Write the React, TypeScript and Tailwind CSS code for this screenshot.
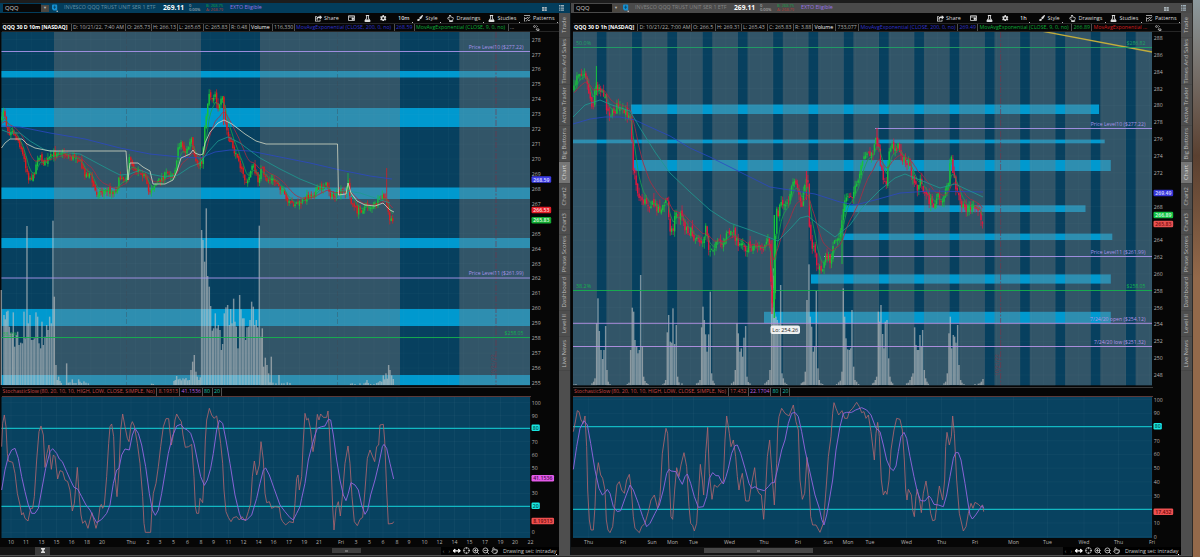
import type { ReactNode } from 'react';
import { clsx } from 'clsx';
import { ZoomIn, ZoomOut, Crosshair, MoveHorizontal, Pointer } from 'lucide-react';
import { FaShareSquare, FaFlask, FaCog, FaRegHandPointUp, FaPaintBrush } from 'react-icons/fa';

type Pt = [number, number];
type Level = { y: number; x1?: number; color: string; label?: string; left?: string };
type Badge = { y: number; text: string; fill: string; color: string };

type PanelConfig = {
  id: string;
  x0: number;
  width: number;
  plotLeft: number;
  plotRight: number;
  title: string;
  info: { text: string; w: string; c: string }[];
  interval: string;
  bands: { x1: number; x2: number; y1: number; y2: number }[];
  afterHours: Pt[];
  levels: Level[];
  price: Pt[];
  noise: number;
  down: string;
  lines: { pts: Pt[]; color: string }[];
  volume: Pt[];
  ticks: { label: string; y: number }[];
  badges: Badge[];
  dashes: number[];
  expiry: number;
  gridX: number;
  study: { k: string; d: string; hi: number; lo: number; zero: number; hundred: number; kv: string; dv: string };
  studyBadges: Badge[];
  times: [string, number][];
};

// numbers come as "x,y x,y ..." to keep the long series readable
const parse = (s: string): Pt[] => s.trim().split(/\s+/).map((p) => p.split(',').map(Number) as Pt);
const toPoints = (pts: Pt[]) => pts.map((p) => p.join(',')).join(' ');

const leftPrice = parse(`2,120 3.3,108 5,115 7,127 9,133 12,127 15,136 18,140 21,147 23,156 27,170 28,177 33,178 35,170 38,155
  42,160 45,163 48,160 53,155 59,150 63,153 68,155 72,158 77,155 82,168 86,175 90,173 93,185 96,193 100,192 107,190 115,192 118,183
  122,175 124,180 127,173 129,160 132,163 135,168 140,170 145,177 148,192 150,190 152,187 157,183 163,177 168,173 173,173 177,163
  178,147 181,142 185,153 187,150 192,138 193,153 197,168 200,162 202,163 203,147 205,127 207,107 209,93 212,98 216,92 217,107
  220,107 222,97 224,110 226,127 230,143 233,147 236,157 238,153 241,170 245,180 248,183 252,163 255,173 258,180 262,167 264,178
  267,180 272,180 278,183 282,190 285,198 287,202 290,205 295,203 300,204 305,198 310,195 318,190 325,184 328,188 332,197 335,196
  339,193 345,192 348,182 350,198 355,209 358,211 362,209 367,205 372,207 378,202 382,197 385,198 387,207 390,220 392,223 394,221`);

const rightPrice = parse(`574,90 577,73 581,72 585,70 587,83 590,97 593,107 595,88 599,86 603,91 605,100 608,111 612,114 617,106
  620,110 624,113 630,113 632,140 633,167 636,183 638,194 643,201 648,203 657,207 662,210 667,198 670,227 673,232 675,210 678,218
  682,213 685,227 690,231 695,238 698,233 702,250 703,243 706,222 709,250 712,247 718,243 723,243 727,230 730,237 733,228 737,243
  738,249 742,238 745,248 752,247 757,245 763,251 769,241 772,306 774,290 775,240 776,210 778,216 780,200 783,203 788,201 790,192
  794,184 797,187 802,208 806,174 808,188 809,220 812,245 815,253 817,266 822,272 824,259 830,260 834,244 837,243 840,233 843,212
  846,197 852,194 857,187 860,173 863,163 866,150 868,153 872,157 877,136 880,160 883,177 887,181 888,162 891,147 898,147 902,156
  905,163 908,163 912,178 915,186 918,187 920,180 923,188 928,199 933,204 938,197 942,200 945,193 948,185 951,158 953,173 956,189
  958,195 963,209 968,207 973,208 978,210 981,217 983,222`);

const leftVolume = parse(`4,300 12,375 16,388 20,365 24,362 28,410 32,430 37,430 40,367 44,470 49,435 53,425 57,465 62,458 67,460
  72,365 76,445 81,108 85,400 90,375 94,450 99,450 103,445 108,367 113,380 117,460 122,475 126,395 130,465 135,440 140,405 144,420
  149,380 154,400 159,92 163,320 168,525 172,570 176,560 180,573 184,579 200,520 205,578 210,577 217,568 222,579 228,579 236,568
  240,575 245,579 252,574 258,578 265,580 455,581 460,582 522,573 526,570 530,558 535,568 540,566 544,571 549,565 554,568 558,564
  563,571 568,570 573,540 578,515 583,495 588,545 592,560 597,570 601,562 605,120 609,150 614,215 619,55 623,258 628,290 632,348
  637,422 641,415 646,370 651,415 655,405 660,420 664,480 668,462 673,370 678,352 683,345 688,405 692,357 696,400 701,326 705,395
  709,410 714,475 719,315 723,358 728,385 732,385 737,450 741,412 746,410 750,390 755,335 760,350 764,405 769,390 773,412 778,107
  783,440 787,415 791,530 796,503 801,525 806,550 810,577 814,500 819,578 828,580 837,555 845,580 852,580 862,577 870,579
  1052,581 1057,580 1065,582 1080,580 1092,580 1097,578 1101,570 1105,579 1112,582 1122,582 1130,579 1135,577 1140,573 1145,575
  1150,556 1154,568 1158,550 1162,566 1166,525 1170,540 1175,556 1180,567`);

const rightVolume = parse(`12,583 18,582 66,580 71,575 75,565 80,400 84,325 88,423 93,480 98,507 102,480 107,408 111,540 115,575 120,582
  172,582 177,578 182,480 187,353 191,365 195,450 200,468 204,490 208,480 212,255 217,470 221,560 225,573 230,579 234,582 278,583
  283,580 287,570 292,427 296,375 301,455 305,458 309,355 314,462 319,405 323,560 327,577 336,580 380,580 385,578 390,570 395,412
  399,350 403,390 407,433 411,485 416,433 421,305 425,550 429,572 433,580 485,580 491,575 496,540 501,400 505,430 510,485 514,475
  518,500 522,443 527,408 531,560 535,576 540,580 585,580 590,575 595,570 600,540 605,285 610,235 614,370 618,380 622,390 627,400
  632,285 636,550 640,565 645,578 650,582 694,580 698,577 702,575 706,545 711,330 717,223 721,380 725,410 730,485 734,470 739,303
  744,535 748,570 753,580 758,582 800,582 806,577 811,572 816,545 820,295 824,380 828,445 833,478 838,480 842,475 846,360 851,530
  855,570 860,575 866,582 908,580 912,578 916,570 920,560 925,365 929,395 933,345 938,432 942,475 946,395 951,390 956,505 960,560
  964,575 968,580 1010,580 1015,578 1020,570 1025,560 1029,550 1034,412 1038,465 1042,480 1046,480 1050,435 1054,470 1058,420
  1063,540 1067,565 1071,575 1075,581 1122,580 1127,575 1132,550 1137,430 1141,380 1145,475 1150,435 1154,440 1158,458 1163,405
  1167,525 1172,570 1176,578 1182,582 1215,582 1225,581 1230,580 1234,575 1239,567`);

const leftK = `5,200 8,130 13,105 18,140 22,220 25,243 38,247 45,280 52,340 60,375 65,405 70,398 75,415 84,423 92,385 98,385 103,350
  110,240 117,155 123,138 130,165 135,262 141,220 147,195 154,268 160,225 165,230 173,297 180,272 188,275 195,300 203,305 210,330
  217,393 223,370 232,262 237,340 243,405 248,430 255,422 264,445 270,420 276,398 288,445 295,420 300,380 304,373 308,385 313,375
  320,290 326,190 330,140 335,132 341,170 345,290 351,350 357,270 362,150 368,102 375,140 382,175 387,185 393,135 397,125 403,138
  412,190 420,250 428,350 432,430 436,457 452,457 455,400 460,340 468,310 475,260 482,200 490,140 498,116 506,116 514,195 520,165
  525,120 530,102 537,115 544,125 549,165 556,202 566,200 575,193 582,290 586,380 590,400 596,400 600,355 608,368 612,300 616,180
  620,120 628,85 635,105 642,115 650,108 656,145 662,190 668,250 672,330 678,395 685,412 693,425 700,413 710,410 718,420 726,410
  736,423 745,395 752,370 757,290 763,243 770,285 778,255 783,185 790,240 795,340 800,368 808,365 815,385 825,380 838,382 843,415
  848,425 857,435 868,425 880,428 885,370 890,295 894,285 898,330 905,290 910,180 915,100 920,120 925,115 932,150 939,215 945,180
  952,103 957,120 962,102 970,112 980,112 984,93 988,150 993,250 998,380 1002,450 1008,385 1015,365 1021,408 1027,350 1035,250
  1044,198 1050,250 1056,350 1063,425 1072,437 1080,418 1088,412 1095,330 1102,235 1110,210 1124,245 1130,200 1136,195 1140,135
  1150,133 1154,180 1160,330 1165,432 1178,430 1181,425`;

const leftD = `5,330 15,270 25,230 35,210 45,205 55,235 65,290 75,335 85,375 95,400 105,400 115,385 125,330 137,265 150,215 158,206
  170,220 178,237 187,245 200,275 212,302 222,322 233,327 245,350 258,375 270,390 280,410 290,428 305,418 320,400 330,375 340,310
  350,270 357,265 365,225 375,207 388,210 397,165 405,145 415,160 425,195 437,260 448,340 457,390 466,406 475,390 485,340 495,280
  505,220 517,170 530,138 542,133 552,145 562,150 572,160 582,190 592,240 602,290 613,316 622,300 632,265 640,220 650,150 658,121
  668,130 678,180 690,250 705,345 718,400 725,418 740,420 755,405 770,355 780,310 790,270 797,264 808,285 822,325 840,375 855,395
  870,413 880,420 890,400 900,380 905,355 915,310 925,240 935,200 945,165 952,145 965,140 975,138 985,118 992,120 1000,165 1010,240
  1020,300 1030,345 1038,362 1045,340 1053,308 1065,315 1075,330 1085,375 1095,403 1103,390 1112,345 1125,300 1137,250 1147,200
  1152,193 1160,205 1170,250 1181,297`;

const rightK = `10,155 17,120 22,92 27,95 33,120 40,130 45,108 50,200 53,330 58,420 63,450 70,450 75,380 78,300 85,248 92,285 98,295
  105,330 109,420 114,450 120,458 128,440 135,370 141,315 148,305 155,330 163,340 170,300 178,283 184,330 190,410 195,445 208,458
  215,440 225,430 235,395 243,360 253,345 263,385 270,350 277,220 288,145 293,160 298,300 303,410 308,418 314,330 320,263 327,290
  333,255 342,218 350,260 357,380 362,430 368,437 373,453 380,430 385,350 391,253 397,300 401,345 407,220 413,142 418,280 426,358
  433,315 442,322 452,310 460,305 465,180 470,108 478,160 483,200 490,180 497,230 502,290 507,330 512,300 517,280 527,363 537,363
  545,310 554,263 560,325 567,340 574,345 581,418 587,330 592,230 599,180 606,280 613,375 620,250 623,150 627,110 635,85 645,100
  657,108 670,75 678,125 685,150 690,300 697,358 704,340 711,232 717,300 722,410 728,435 738,435 750,457 760,430 768,330 775,230
  783,170 788,100 792,68 798,85 806,105 816,92 824,115 832,115 838,95 848,85 860,67 868,80 875,98 882,95 888,115 895,105 903,155
  913,240 918,160 923,127 928,170 934,300 940,345 946,333 951,343 957,300 963,210 972,150 980,115 990,118 997,150 1003,240 1007,330
  1011,360 1015,328 1024,345 1028,390 1033,410 1038,350 1042,328 1050,370 1054,398 1060,340 1068,303 1075,350 1082,400 1088,422
  1095,420 1100,380 1108,318 1118,360 1124,300 1127,200 1131,157 1138,195 1144,170 1148,108 1153,160 1160,300 1168,400 1180,453
  1188,440 1195,400 1203,370 1209,385 1215,367 1225,373 1232,380 1238,375 1241,395`;

const rightD = `10,268 20,200 30,145 42,122 52,135 62,190 75,270 87,325 97,345 105,338 112,328 120,340 130,380 142,395 152,392 165,355
  180,315 190,330 205,370 218,410 230,440 240,430 255,400 268,375 280,330 290,280 297,268 303,273 318,275 327,295 337,313 345,290
  352,282 362,310 373,350 385,382 400,380 410,350 418,295 428,278 438,287 446,287 452,300 460,312 468,290 475,265 485,220 495,197
  502,195 512,220 525,265 537,310 545,325 555,320 565,327 583,332 595,320 605,308 613,308 622,270 635,210 645,180 655,130 665,100
  675,97 685,110 695,155 705,210 715,255 725,300 735,345 748,385 755,418 762,435 770,405 778,360 788,300 798,210 810,140 820,100
  830,97 845,97 857,90 875,83 890,90 903,105 918,145 930,155 940,195 950,240 960,263 970,272 978,258 985,215 993,170 1002,157
  1010,175 1020,230 1032,290 1042,335 1052,362 1065,363 1077,348 1083,355 1092,373 1105,375 1120,380 1130,345 1140,290 1150,235
  1157,218 1165,218 1173,240 1185,310 1195,375 1200,405 1207,417 1217,405 1227,390 1237,377 1241,385`;

const shift = (pts: Pt[], dx: number): Pt[] => pts.map(([x, y]) => [dx + x / 3, y]);

const PURPLE = '#a894ea';
const GREEN = '#14b24e';
const BLUE = '#2b47c4';
const TEAL = '#1d9a90';

const dayStarts = Array.from({ length: 16 }, (_, i) => 596.8 + i * 35.28);
const rightGaps: Pt[] = [
  [573, dayStarts[0]],
  ...dayStarts.map((x, i): Pt => [x + 9.6, i < 15 ? dayStarts[i + 1] : 1152]),
];

const left: PanelConfig = {
  id: 'left',
  x0: 0,
  width: 559,
  plotLeft: 1.5,
  plotRight: 530,
  title: 'QQQ 30 D 10m [NASDAQ]',
  interval: '10m',
  info: [
    { text: 'D: 10/21/22, 7:40 AM', w: 'w-[54px]', c: 'text-[#b0b0b0]' },
    { text: 'O: 265.73', w: 'w-[26px]', c: 'text-[#b0b0b0]' },
    { text: 'H: 266.13', w: 'w-[26px]', c: 'text-[#b0b0b0]' },
    { text: 'L: 265.65', w: 'w-[26px]', c: 'text-[#b0b0b0]' },
    { text: 'C: 265.83', w: 'w-[26px]', c: 'text-[#b0b0b0]' },
    { text: 'R: 0.48', w: 'w-[20px]', c: 'text-[#b0b0b0]' },
    { text: 'Volume', w: 'w-[23px]', c: 'text-white' },
    { text: '116,330', w: 'w-[22px]', c: 'text-[#b0b0b0]' },
    { text: 'MovAvgExponential (CLOSE, 200, 0, no)', w: 'w-[100px]', c: 'text-[#3034d0]' },
    { text: '268.59', w: 'w-[20px]', c: 'text-[#3034d0]' },
    { text: 'MovAvgExponential (CLOSE, 9, 0, no)', w: 'w-[94px]', c: 'text-[#0cae38]' },
    { text: '...', w: 'w-[10px]', c: 'text-[#b0b0b0]' },
  ],
  bands: [
    { x1: 1.5, x2: 530, y1: 71, y2: 77.5 },
    { x1: 1.5, x2: 530, y1: 108, y2: 127 },
    { x1: 1.5, x2: 530, y1: 187.5, y2: 199 },
    { x1: 1.5, x2: 530, y1: 238, y2: 248 },
    { x1: 1.5, x2: 530, y1: 309, y2: 326 },
    { x1: 1.5, x2: 530, y1: 375, y2: 385 },
  ],
  afterHours: [[54, 201], [260, 400], [459.3, 530]],
  levels: [
    { y: 51.5, color: PURPLE, label: 'Price Level10 ($277.22)' },
    { y: 278, color: PURPLE, label: 'Price Level11 ($261.99)' },
    { y: 337.5, color: GREEN, label: '$258.05' },
  ],
  price: leftPrice,
  noise: 7,
  down: '#dc1c20',
  lines: [
    { color: BLUE, pts: parse('1.5,126 20,127 50,133 85,139 120,148 150,154 180,157 200,158 215,152 230,150 250,151 280,157 310,163 340,170 370,176 392,179') },
    { color: TEAL, pts: parse('2,130 10,133 20,133 30,141 45,150 60,152 80,154 95,162 110,170 120,175 130,174 140,170 150,174 165,177 178,175 190,167 200,163 208,152 218,141 228,137 240,143 260,158 280,169 300,179 320,187 340,190 360,193 390,203') },
    { color: '#d3d8c4', pts: parse('1.5,148 5,143 10,139 22,139 27,144 35,148 50,151 126,151 128,180 130,163 138,163 143,167 150,171 153,184 165,184 173,180 177,171 181,158 190,154 193,150 195,153 200,155 203,154 205,143 210,132 218,123 224,120 232,124 245,134 256,141 266,144 337.5,144 338.5,195 346,194 348,183 351,193 357,201 365,205 375,206 383,203 390,210 394,212') },
  ],
  volume: shift(leftVolume, 0),
  ticks: Array.from({ length: 24 }, (_, i) => ({ label: String(278 - i), y: 39.6 + i * 14.93 })),
  badges: [
    { y: 179.5, text: '268.59', fill: '#3d3de6', color: '#dcdcff' },
    { y: 210, text: '266.53', fill: '#e31e28', color: '#ffdede' },
    { y: 220.3, text: '265.83', fill: '#12ab32', color: '#e0ffe0' },
  ],
  dashes: [126.5, 337.5],
  expiry: 496,
  gridX: 14.9,
  study: { k: leftK, d: leftD, hi: 145, lo: 379, zero: 457, hundred: 68, kv: '8.19313', dv: '41.1536' },
  studyBadges: [
    { y: 427.8, text: '80', fill: '#19e6e0', color: '#055' },
    { y: 478.2, text: '41.1536', fill: '#e35ae8', color: '#4a0a50' },
    { y: 505.8, text: '20', fill: '#19e6e0', color: '#055' },
    { y: 521, text: '8.19313', fill: '#ee5050', color: '#6a0808' },
  ],
  times: [
    ['10', 11], ['11', 26], ['13', 41.5], ['15', 56.5], ['16', 71.5], ['18', 87], ['20', 102], ['Thu', 131], ['2', 148], ['3', 160],
    ['5', 173.5], ['6', 187.5], ['8', 201], ['9', 213.5], ['11', 228.5], ['12', 243.5], ['14', 258.5], ['16', 273.5], ['17', 289],
    ['19', 304.3], ['21', 319], ['Fri', 341], ['3', 356], ['5', 369.5], ['6', 383], ['8', 397], ['9', 409], ['10', 424.5],
    ['12', 439.5], ['14', 454.5], ['15', 469.5], ['17', 485], ['19', 500.5], ['20', 515], ['22', 530.5],
  ],
};

const right: PanelConfig = {
  id: 'right',
  x0: 571,
  width: 610,
  plotLeft: 573,
  plotRight: 1152,
  title: 'QQQ 30 D 1h [NASDAQ]',
  interval: '1h',
  info: [
    { text: 'D: 10/21/22, 7:00 AM', w: 'w-[53.5px]', c: 'text-[#b0b0b0]' },
    { text: 'O: 266.5', w: 'w-[24px]', c: 'text-[#b0b0b0]' },
    { text: 'H: 269.31', w: 'w-[26px]', c: 'text-[#b0b0b0]' },
    { text: 'L: 265.43', w: 'w-[26px]', c: 'text-[#b0b0b0]' },
    { text: 'C: 265.83', w: 'w-[26px]', c: 'text-[#b0b0b0]' },
    { text: 'R: 3.88', w: 'w-[19.5px]', c: 'text-[#b0b0b0]' },
    { text: 'Volume', w: 'w-[23px]', c: 'text-white' },
    { text: '733,077', w: 'w-[23px]', c: 'text-[#b0b0b0]' },
    { text: 'MovAvgExponential (CLOSE, 200, 0, no)', w: 'w-[99px]', c: 'text-[#3034d0]' },
    { text: '269.49', w: 'w-[20px]', c: 'text-[#3034d0]' },
    { text: 'MovAvgExponential (CLOSE, 9, 0, no)', w: 'w-[94px]', c: 'text-[#0cae38]' },
    { text: '266.89', w: 'w-[20px]', c: 'text-[#0cae38]' },
    { text: 'MovAvgExponential ...', w: 'w-[58px]', c: 'text-[#d41c1c]' },
  ],
  bands: [
    { x1: 631, x2: 1099, y1: 104.5, y2: 114 },
    { x1: 573, x2: 1104.7, y1: 139.6, y2: 143.3 },
    { x1: 633, x2: 1110.8, y1: 160, y2: 171 },
    { x1: 844, x2: 1085.5, y1: 205.3, y2: 212 },
    { x1: 843, x2: 1112.3, y1: 233.6, y2: 240 },
    { x1: 811, x2: 1110.8, y1: 274.4, y2: 283.6 },
    { x1: 764, x2: 1110.8, y1: 311.8, y2: 323 },
  ],
  afterHours: rightGaps,
  levels: [
    { y: 47.5, color: '#1fa265', label: '$286.82', left: '50.0%' },
    { y: 128.5, x1: 875, color: PURPLE, label: 'Price Level10 ($277.22)' },
    { y: 256.5, x1: 824, color: PURPLE, label: 'Price Level11 ($261.99)' },
    { y: 290.5, color: GREEN, label: '$258.05', left: '38.2%' },
    { y: 323.3, color: '#b794e8', label: '7/24/20 open ($254.12)' },
    { y: 346.5, color: '#b794e8', label: '7/24/20 low ($251.32)' },
  ],
  price: rightPrice,
  noise: 9,
  down: '#e0183f',
  lines: [
    { color: BLUE, pts: parse('573,124 590,119 605,117 620,117 635,120 650,127 670,136 690,148 710,157 740,172 770,187 790,190 815,194 840,202 855,205 875,200 900,193 930,191 983,192') },
    { color: TEAL, pts: parse('573,117 585,105 600,100 612,105 630,111 640,128 655,152 670,173 690,192 710,210 730,223 750,230 768,237 778,241 790,229 800,218 808,216 820,226 835,237 850,225 862,208 880,190 895,178 905,174 920,180 940,188 955,184 970,191 983,197') },
  ],
  volume: shift(rightVolume, 570),
  ticks: Array.from({ length: 21 }, (_, i) => ({ label: String(288 - i * 2), y: 38 + i * 16.85 })),
  badges: [
    { y: 193, text: '269.49', fill: '#3636d8', color: '#dcdcff' },
    { y: 215, text: '266.89', fill: '#14c044', color: '#d8ffe0' },
    { y: 224, text: '265.83', fill: '#e85252', color: '#7a0c0c' },
  ],
  dashes: [],
  expiry: 1000.6,
  gridX: 11.76,
  study: { k: rightK, d: rightD, hi: 140, lo: 388, zero: 470, hundred: 59, kv: '17.432', dv: '22.1704' },
  studyBadges: [
    { y: 426.3, text: '80', fill: '#19e6e0', color: '#055' },
    { y: 511.8, text: '17.432', fill: '#ee5050', color: '#6a0808' },
  ],
  times: [
    ['Thu', 588.7], ['Fri', 623], ['Sun', 652], ['Mon', 672.5], ['Tue', 693.5], ['Wed', 729.5], ['Thu', 764], ['Fri', 798],
    ['Sun', 828], ['Mon', 848], ['Tue', 870], ['Wed', 906.5], ['Thu', 941.5], ['Fri', 975], ['Mon', 1013.5], ['Tue', 1047.5],
    ['Wed', 1084], ['Thu', 1118.5], ['Fri', 1152],
  ],
};

const sideTabs = [
  { label: 'Trade', h: 'h-[25px]' },
  { label: 'Times And Sales', h: 'h-[47px]' },
  { label: 'Active Trader', h: 'h-[41px]' },
  { label: 'Big Buttons', h: 'h-[36px]' },
  { label: 'Chart', h: 'h-[22px]', active: true },
  { label: 'Chart2', h: 'h-[26px]' },
  { label: 'Chart3', h: 'h-[25px]' },
  { label: 'Phase Scores', h: 'h-[40px]' },
  { label: 'Dashboard', h: 'h-[36px]' },
  { label: 'Level II', h: 'h-[26px]' },
  { label: 'Live News', h: 'h-[34px]' },
];

function interpolate(pts: Pt[], x: number) {
  const i = pts.findIndex((p) => p[0] >= x);
  if (i <= 0) return pts[i === 0 ? 0 : pts.length - 1][1];
  const [x1, y1] = pts[i - 1];
  const [x2, y2] = pts[i];
  return y1 + ((y2 - y1) * (x - x1)) / (x2 - x1);
}

function buildCandles(pts: Pt[], noise: number) {
  let seed = 7;
  const rand = () => {
    seed = (seed * 16807) % 2147483647;
    return seed / 2147483647;
  };
  const out: { x: number; open: number; close: number; high: number; low: number }[] = [];
  let open = pts[0][1];
  for (let x = pts[0][0]; x <= pts[pts.length - 1][0]; x += 1.48) {
    const close = interpolate(pts, x) + (rand() - 0.5) * noise;
    const high = Math.min(open, close) - rand() * noise * 0.7;
    const low = Math.max(open, close) + rand() * noise * 0.7;
    out.push({ x, open, close, high, low });
    open = close + (rand() - 0.5) * noise * 0.5;
  }
  return out;
}

function ema(candles: { x: number; close: number }[], length: number): Pt[] {
  const k = 2 / (length + 1);
  let v = candles[0].close + 8;
  return candles.map((c) => {
    v += (c.close - v) * k;
    return [c.x, Number(v.toFixed(1))];
  });
}

const isCovered = (y: number, badges: Badge[]) => badges.some((b) => Math.abs(b.y - y) < 5.2);

function AxisBadge({ x, badge }: { x: number; badge: Badge }) {
  const w = badge.text.length * 2.85 + 2.6;
  return (
    <g>
      <rect x={x} y={badge.y - 3.2} width={w} height="6.4" rx="1.2" fill={badge.fill} />
      <text x={x + w / 2} y={badge.y + 2} textAnchor="middle" fill={badge.color} fontWeight="600">
        {badge.text}
      </text>
    </g>
  );
}

function PriceChart({ c }: { c: PanelConfig }) {
  const candles = buildCandles(c.price, c.noise);
  const gridCount = Math.ceil((c.plotRight - c.plotLeft) / c.gridX);
  return (
    <svg
      className="block shrink-0 text-[5.2px]"
      width={c.width}
      height="354"
      viewBox={`${c.x0} 32 ${c.width} 354`}
    >
      <rect x={c.plotLeft} y="32" width={c.plotRight - c.plotLeft} height="353.3" fill="#07405f" />
      {c.bands.map((b) => (
        <rect key={b.y1} x={b.x1} y={b.y1} width={b.x2 - b.x1} height={b.y2 - b.y1} fill="#0099cf" />
      ))}
      {c.afterHours.map(([x1, x2]) => (
        <rect key={x1} x={x1} y="32" width={x2 - x1} height="353.3" fill="rgba(128,121,121,0.36)" />
      ))}
      <g stroke="#c8dbe6" strokeOpacity="0.045" strokeWidth="0.8">
        {Array.from({ length: gridCount }, (_, i) => (
          <line key={i} x1={c.plotLeft + i * c.gridX} x2={c.plotLeft + i * c.gridX} y1="32" y2="385" />
        ))}
        {c.ticks.map((t) => (
          <line key={t.label} x1={c.plotLeft} x2={c.plotRight} y1={t.y} y2={t.y} />
        ))}
      </g>
      {c.dashes.map((x) => (
        <line key={x} x1={x} x2={x} y1="32" y2="385" stroke="#3e4a55" strokeOpacity="0.6" strokeWidth="0.6" strokeDasharray="5 2" />
      ))}
      <line
        x1={c.expiry}
        x2={c.expiry}
        y1="32"
        y2="385"
        stroke="#7c3145"
        strokeOpacity="0.75"
        strokeWidth="0.8"
        strokeDasharray="6 1.5 2 1.5"
      />
      <text transform={`translate(${c.expiry - 1.5} 376) rotate(-90)`} fill="#8a2f42" fillOpacity="0.8">
        10/21/22
      </text>
      <g fill="#c5c5c5" fillOpacity="0.62">
        {c.volume.map(([x, y]) => (
          <rect key={x} x={x - 0.75} y={190 + y / 3} width="1.45" height={Math.max(0, 195 - y / 3)} />
        ))}
      </g>
      {c.id === 'right' && <line x1="1041" y1="31" x2="1152" y2="52" stroke="#c2ac3c" strokeWidth="1.3" />}
      {c.levels.map((l) => (
        <g key={l.y} fill={l.color}>
          <line x1={l.x1 ?? c.plotLeft} x2={c.plotRight} y1={l.y} y2={l.y} stroke={l.color} strokeWidth="1" strokeOpacity="0.9" />
          <text x={c.plotRight - 6.5} y={l.y - 2.8} textAnchor="end" fontSize="5.15">
            {l.label}
          </text>
          {l.left && (
            <text x={c.plotLeft + 3} y={l.y - 2.8} fontSize="5.4">
              {l.left}
            </text>
          )}
        </g>
      ))}
      {c.id === 'left' && (
        <text x="2.5" y="336" fill="#22b14c">
          38.2%
        </text>
      )}
      {candles.map((k) => {
        const color = k.close <= k.open ? '#18c23c' : c.down;
        return (
          <g key={k.x}>
            <line x1={k.x} x2={k.x} y1={k.high} y2={k.low} stroke={color} strokeWidth="0.7" />
            <rect
              x={k.x - 0.7}
              y={Math.min(k.open, k.close)}
              width="1.4"
              height={Math.max(0.8, Math.abs(k.open - k.close))}
              fill={color}
            />
          </g>
        );
      })}
      {c.id === 'left' ? (
        <g strokeWidth="0.8">
          <line x1="348" x2="348" y1="173" y2="190" stroke="#18c23c" />
          <line x1="386.7" x2="386.7" y1="168" y2="200" stroke={c.down} />
          <line x1="223.5" x2="223.5" y1="96" y2="125" stroke={c.down} />
        </g>
      ) : (
        <g strokeWidth="1">
          <line x1="772" x2="772" y1="240" y2="314" stroke={c.down} />
          <line x1="774.3" x2="774.3" y1="215" y2="318" stroke="#18c23c" strokeWidth="1.4" />
          <line x1="596.4" x2="596.4" y1="66" y2="95" stroke="#18c23c" />
          <line x1="806.4" x2="806.4" y1="171" y2="200" stroke={c.down} />
          <line x1="842" x2="842" y1="225" y2="264" stroke="#18c23c" />
          <line x1="877" x2="877" y1="128" y2="150" stroke={c.down} />
        </g>
      )}
      <g fill="none" strokeWidth="0.8">
        <polyline points={toPoints(ema(candles, 6))} stroke="#19a64a" />
        <polyline points={toPoints(ema(candles, 16))} stroke="#b02a40" />
        {c.lines.map((l) => (
          <polyline key={l.color} points={toPoints(l.pts)} stroke={l.color} strokeLinejoin="round" />
        ))}
      </g>
      {c.id === 'right' && (
        <g>
          <rect x="770.5" y="325.4" width="29.5" height="8.6" rx="2" fill="#eef0f0" />
          <text x="785.2" y="331.7" textAnchor="middle" fill="#222" fontSize="5.4">
            Lo: 254.26
          </text>
        </g>
      )}
      <g fill="#b4b4b4">
        {c.ticks
          .filter((t) => !isCovered(t.y, c.badges))
          .map((t) => (
            <text key={t.label} x={c.plotRight + 1.8} y={t.y + 2}>
              {t.label}
            </text>
          ))}
      </g>
      {c.badges.map((b) => (
        <AxisBadge key={b.text} x={c.plotRight + 1.5} badge={b} />
      ))}
    </svg>
  );
}

// the two oscillator series are stored on a 3-units-per-pixel grid whose top is y=380
function StudyChart({ c }: { c: PanelConfig }) {
  const { study } = c;
  const originX = c.id === 'left' ? 0 : 570;
  const levelY = (v: number) => 380 + (study.zero - ((study.zero - study.hundred) * v) / 100) / 3;
  return (
    <svg
      className="block shrink-0 text-[5.2px]"
      width={c.width}
      height="150"
      viewBox={`${c.x0} 397 ${c.width} 150`}
    >
      <rect x={c.plotLeft} y="397" width={c.plotRight - c.plotLeft} height="141" fill="#084260" />
      <g stroke="#c8dbe6" strokeOpacity="0.05" strokeWidth="0.8">
        {c.times.map(([, x]) => (
          <line key={x} x1={x} x2={x} y1="397" y2="538" />
        ))}
        {[0, 10, 30, 40, 50, 60, 70, 90, 100].map((v) => (
          <line key={v} x1={c.plotLeft} x2={c.plotRight} y1={levelY(v)} y2={levelY(v)} />
        ))}
      </g>
      <g stroke="#12b8c2" strokeWidth="1.1">
        <line x1={c.plotLeft} x2={c.plotRight} y1={380 + study.hi / 3} y2={380 + study.hi / 3} />
        <line x1={c.plotLeft} x2={c.plotRight} y1={380 + study.lo / 3} y2={380 + study.lo / 3} />
      </g>
      <g transform={`translate(${originX} 380) scale(0.33333)`} fill="none" strokeLinejoin="round">
        <polyline points={study.k} stroke="#b0656e" strokeWidth="2.5" />
        <polyline points={study.d} stroke="#8c64d8" strokeWidth="2.9" />
      </g>
      <g fill="#b4b4b4">
        {[100, 90, 70, 60, 50, 40, 30, 10, 0]
          .filter((v) => !isCovered(levelY(v), c.studyBadges))
          .map((v) => (
            <text key={v} x={c.plotRight + 1.8} y={levelY(v) + 2}>
              {v}
            </text>
          ))}
        {c.times.map(([label, x]) => (
          <text key={x} x={x} y="543.9" textAnchor="middle">
            {label}
          </text>
        ))}
      </g>
      {c.studyBadges.map((b) => (
        <AxisBadge key={b.text} x={c.plotRight + 1.5} badge={b} />
      ))}
    </svg>
  );
}

function SymbolBar({ active }: { active?: boolean }) {
  return (
    <div
      className={clsx(
        'flex h-[10px] shrink-0 items-center pl-[3px] whitespace-nowrap',
        active ? 'bg-[#033d5c]' : 'bg-[#4a4a4a]',
      )}
    >
      <div className="flex h-[8px] w-[38px] items-center bg-[#080808] pl-[2px] text-[5.8px] text-[#d0d0d0]">QQQ</div>
      <div className="mr-[3px] flex h-[7px] w-[8px] items-center justify-center bg-[#4b4741] text-[4px] text-[#bbb]">▼</div>
      <svg className="h-[8px] w-[6px]" viewBox="0 0 6 8">
        <path d="M1 0.5h3.2a1 1 0 0 1 1 1v4a1 1 0 0 1-1 1H1.5L0 5V1.500a1 1 0 0 1 1-1z" fill="#1590d2" />
        <path d="M2.600 1.500v3.500M4 3.200H1.300" stroke="#063c5a" strokeWidth="0.7" />
        <rect x="4.600" y="6.700" width="1.200" height="1.200" fill="#ddd" />
      </svg>
      <span className={clsx('ml-[6px] w-[99px] text-[5.3px]', active ? 'text-[#6890a5]' : 'text-[#858585]')}>
        INVESCO QQQ TRUST UNIT SER 1 ETF
      </span>
      <span className="w-[26px] text-[6.7px] font-bold text-white">269.11</span>
      <span className="w-[17px] text-[4px] leading-[4px] text-[#c8c8c8]">
        0<br />
        0.00%
      </span>
      <span className="w-[24px] text-[4px] leading-[4px]">
        <span className="text-[#14a048]">B: 268.75</span>
        <br />
        <span className="text-[#b04038]">A: 268.79</span>
      </span>
      <span className="text-[5.3px] text-[#9a74e6]">EXTO Eligible</span>
      <span className="mr-[6px] ml-auto flex items-center gap-[12px] pt-[2px]">
        <svg className="h-[4px] w-[5px]" viewBox="0 0 5 4" fill="#a9b4ba">
          <path d="M0 0h2.2v1.7H0zM2.6 0h2.2v1.7H2.6zM0 2.2h2.2v1.7H0zM2.6 2.2h2.2v1.7H2.6z" />
        </svg>
        <svg className="-mt-[2px] h-[6px] w-[5px]" viewBox="0 0 5 6" fill="#9fb0ba">
          <path d="M0 0h1v1H0zM1.5 0H5v1H1.5zM0 1.6h1v1H0zM1.5 1.6H5v1H1.5zM0 3.2h1v1H0zM1.5 3.2H5v1H1.5zM0 4.8h1v1H0zM1.5 4.8H5v1H1.5z" />
        </svg>
      </span>
    </div>
  );
}

function ToolItem({ w, icon, label, menu }: { w: string; icon?: ReactNode; label?: string; menu?: boolean }) {
  return (
    <div className={clsx('flex h-full items-center gap-[2.5px]', w)}>
      {icon}
      {label && <span>{label}</span>}
      {menu && <span className="size-[1px] self-end bg-[#bbb]" />}
    </div>
  );
}

function Toolbar({ interval }: { interval: string }) {
  return (
    <div className="flex h-[10px] shrink-0 items-center justify-end text-[5.5px] text-[#dcdcdc]">
      <ToolItem w="w-[33px]" icon={<FaShareSquare className="size-[7px]" />} label="Share" />
      <ToolItem
        w="w-[16.5px]"
        icon={
          <svg className="h-[6px] w-[7px]" viewBox="0 0 14 12" fill="none" stroke="currentColor" strokeWidth="1.6">
            <path d="M1 1.5h12v9.5H1zM1 4h12" />
            <path d="M8 6h3v3H8z" fill="currentColor" />
          </svg>
        }
      />
      <ToolItem w="w-[16px]" icon={<FaFlask className="size-[7px]" />} />
      <ToolItem w="w-[17px]" icon={<FaCog className="size-[6.5px]" />} />
      <div className="flex h-full w-[20px] items-center gap-[2.5px] pl-[1px] font-semibold">
        <span>{interval}</span>
        <span className="size-[1px] self-end bg-[#bbb]" />
      </div>
      <ToolItem w="w-[30px]" icon={<FaPaintBrush className="size-[6px]" />} label="Style" menu />
      <ToolItem w="w-[41px]" icon={<FaRegHandPointUp className="size-[7px]" />} label="Drawings" menu />
      <ToolItem w="w-[36px]" icon={<FaFlask className="size-[7px]" />} label="Studies" menu />
      <ToolItem
        w="w-[35px]"
        icon={
          <svg className="h-[7px] w-[6.5px]" viewBox="0 0 13 14" fill="none" stroke="currentColor" strokeWidth="1.4">
            <path d="M0 1h12M1 13V5l3 3 3-4 2 3 3-4M4 13l3-4 3 3 2-3" />
          </svg>
        }
        label="Patterns"
        menu
      />
    </div>
  );
}

function InfoRow({ c }: { c: PanelConfig }) {
  return (
    <div
      className={clsx(
        'flex h-[9px] shrink-0 items-center overflow-hidden border-y border-[#262626] text-[5.25px] whitespace-nowrap',
        c.id === 'left' ? 'ml-[1.5px]' : 'ml-[2px]',
      )}
    >
      <span className={clsx('shrink-0 pl-[1px] font-bold text-white', c.id === 'left' ? 'w-[69px]' : 'w-[64px]')}>{c.title}</span>
      {c.info.map((cell) => (
        <span key={cell.text} className={clsx('shrink-0 overflow-hidden border-l border-[#505050] pl-[1.5px]', cell.w, cell.c)}>
          {cell.text}
        </span>
      ))}
      <svg className="mr-[19px] ml-auto h-[6px] w-[7px] shrink-0" viewBox="0 0 14 12" fill="none" stroke="#c0c0c0" strokeWidth="1.6">
        <circle cx="3" cy="3" r="1.8" />
        <path d="M7 1l2 2-2 2M6 8h6v3H8z" />
      </svg>
    </div>
  );
}

function StudyHeader({ c }: { c: PanelConfig }) {
  return (
    <div
      className={clsx(
        'mt-[1px] mr-[28px] flex h-[10px] shrink-0 items-center border-y border-t-[#3a3a3a] border-b-[#5b3a3a] text-[5.25px] whitespace-nowrap',
        c.id === 'left' ? 'ml-[1.5px]' : 'ml-[2px]',
      )}
    >
      <span className="w-[154.5px] pl-[1px] text-[#c84846]">StochasticSlow (80, 20, 10, 10, HIGH, LOW, CLOSE, SIMPLE, No)</span>
      <span className={clsx('border-l border-[#505050] pl-[1.5px] text-[#c84846]', c.id === 'left' ? 'w-[23px]' : 'w-[20px]')}>
        {c.study.kv}
      </span>
      <span className="w-[22.5px] border-l border-[#505050] pl-[1.5px] text-[#bd64e2]">{c.study.dv}</span>
      <span className="w-[10px] border-l border-[#505050] pl-[1.5px] text-[#18c4b4]">80</span>
      <span className="w-[10px] border-x border-[#505050] pl-[1.5px] text-[#18c4b4]">20</span>
    </div>
  );
}

function ScrollRow({ id }: { id: string }) {
  return (
    <div className="flex h-[7.5px] shrink-0 items-center bg-[#161616] text-[5.4px] whitespace-nowrap text-[#c8c8c8]">
      {id === 'left' ? (
        <>
          <span className="ml-[35px] flex h-[7.5px] w-[15px] items-center justify-center bg-[#3d3d3d]">
            <svg className="h-[5px] w-[4px]" viewBox="0 0 4 5" fill="#ddd">
              <path d="M0 0h4v1L2.6 2.5 4 4v1H0V4l1.4-1.5L0 1z" />
            </svg>
          </span>
          <span className="ml-[282px] flex h-[5px] w-[29px] items-center justify-center bg-[#3f3f3f]">
            <span className="h-[2px] w-[3px] bg-[#707070]" />
          </span>
        </>
      ) : (
        <span className="ml-[133px] flex h-[5px] w-[109px] items-center justify-center bg-[#484848]">
          <span className="h-[2px] w-[3px] bg-[#707070]" />
        </span>
      )}
      <span className="ml-auto flex h-full items-center bg-black pr-[2px] pl-[2px]">
        <span className="mr-[4px] text-[#8a8a8a]">‹</span>
        <span className="mr-[3px] text-[#8a8a8a]">›</span>
        <MoveHorizontal className="mr-[2.5px] size-[7.5px] text-white" strokeWidth={4} />
        <Crosshair className="mr-[2px] size-[7px]" strokeWidth={2.5} />
        <ZoomIn className="mr-[2px] size-[7.5px]" strokeWidth={2.8} />
        <ZoomOut className="mr-[2px] size-[7.5px]" strokeWidth={2.8} />
        <Pointer className="mr-[5px] size-[7px]" strokeWidth={2.5} />
        <span className="w-[53px]">Drawing set: intraday</span>
        <span className="size-[1px] self-end bg-white" />
      </span>
    </div>
  );
}

function SideTabs() {
  return (
    <div className="flex w-[10.5px] shrink-0 flex-col bg-[#4e4e4e] text-[5.9px] text-[#bebebe]">
      {sideTabs.map((t) => (
        <div
          key={t.label}
          className={clsx(
            'flex shrink-0 items-center justify-center border-b border-[#474747] whitespace-nowrap',
            t.h,
            t.active && 'bg-[#767676] text-[#d8d8d8]',
          )}
        >
          <span className="rotate-180 leading-[9px] [writing-mode:vertical-rl]">{t.label}</span>
        </div>
      ))}
    </div>
  );
}

function ChartPanel({ c }: { c: PanelConfig }) {
  return (
    <section className={clsx('flex shrink-0 flex-col', c.id === 'left' ? 'w-[569.5px]' : 'w-[620.5px]')}>
      <SymbolBar active={c.id === 'left'} />
      <div className="flex">
        <div className={clsx('flex shrink-0 flex-col bg-[#060606]', c.id === 'left' ? 'w-[559px]' : 'w-[610px]')}>
          <Toolbar interval={c.interval} />
          <InfoRow c={c} />
          <PriceChart c={c} />
          <StudyHeader c={c} />
          <StudyChart c={c} />
          <ScrollRow id={c.id} />
        </div>
        <SideTabs />
      </div>
    </section>
  );
}

export default function App() {
  return (
    <main className="flex h-[557px] w-[1200px] overflow-hidden bg-[#10161a] font-['Open_Sans',sans-serif]">
      <div className="flex w-[1192.5px] shrink-0 flex-col border-r border-[#2c2a28]">
        <div className="h-[3px] bg-[#1d1d1d]" />
        <div className="flex gap-[1.5px]">
          <ChartPanel c={left} />
          <ChartPanel c={right} />
        </div>
        <div className="grow border-t border-[#555] bg-[#2a2a2a]" />
      </div>
      <div className="grow bg-linear-to-b from-[#8c999d] from-0% via-[#5a4030] via-28% to-[#93694a] to-50%" />
    </main>
  );
}
